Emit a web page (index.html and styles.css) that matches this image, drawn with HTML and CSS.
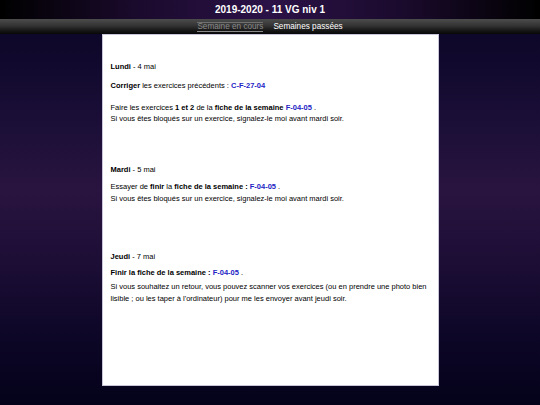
FILE: index.html
```
<!DOCTYPE html>
<html lang="fr">
<head>
<meta charset="utf-8">
<title>2019-2020 - 11 VG niv 1</title>
<link rel="stylesheet" href="styles.css">
</head>
<body>
<header class="titlebar">2019-2020 - 11 VG niv 1</header>
<nav class="navbar">
  <a class="tab tab-current">Semaine en cours</a>
  <a class="tab">Semaines passées</a>
</nav>
<main class="panel">
  <section class="day day-lundi">
    <p class="day-title"><b>Lundi</b> - 4 mai</p>
    <p class="task task-gap"><b>Corriger</b> les exercices précédents : <a class="ref">C-F-27-04</a></p>
    <p class="task">Faire les exercices <b>1 et 2</b> de la <b>fiche de la semaine</b> <a class="ref">F-04-05</a> .<br>Si vous êtes bloqués sur un exercice, signalez-le moi avant mardi soir.</p>
  </section>
  <section class="day day-mardi">
    <p class="day-title"><b>Mardi</b> - 5 mai</p>
    <p class="task">Essayer de <b>finir</b> la <b>fiche de la semaine : </b><a class="ref">F-04-05</a> .<br>Si vous êtes bloqués sur un exercice, signalez-le moi avant mardi soir.</p>
  </section>
  <section class="day day-jeudi">
    <p class="day-title"><b>Jeudi</b> - 7 mai</p>
    <p class="task task-small"><b>Finir la fiche de la semaine : </b><a class="ref">F-04-05</a> .</p>
    <p class="task">Si vous souhaitez un retour, vous pouvez scanner vos exercices (ou en prendre une photo bien lisible ; ou les taper à l'ordinateur) pour me les envoyer avant jeudi soir.</p>
  </section>
</main>
</body>
</html>
```
FILE: styles.css
```
* { box-sizing: border-box; }
html, body { margin: 0; padding: 0; }
body {
  width: 540px;
  height: 405px;
  overflow: hidden;
  font-family: "Liberation Sans", Arial, sans-serif;
  background: linear-gradient(to bottom, #0a0524 0px, #0d0729 34px, #1c0f38 130px, #29143f 190px, #1d0e36 260px, #0e0728 330px, #04021a 405px);
  display: flex;
  flex-direction: column;
}
.titlebar {
  height: 19px;
  flex: none;
  background: linear-gradient(to right, #000 0%, #1a0a2c 25%, #2b1247 50%, #1a0a2c 75%, #000 100%);
  color: #fff;
  font-weight: bold;
  font-size: 10px;
  line-height: 19px;
  text-align: center;
}
.navbar {
  height: 15px;
  flex: none;
  background: linear-gradient(to bottom, #4c4c4c 0%, #333 45%, #141414 80%, #080808 100%);
  display: flex;
  justify-content: center;
  align-items: center;
  gap: 10px;
  font-size: 8.2px;
}
.tab {
  color: #fff;
  line-height: 8px;
  text-decoration: none;
}
.tab-current {
  color: #8a8a8a;
  border-top: 1px solid #6f6f6f;
  border-bottom: 1px solid #8a8a8a;
}
.panel {
  width: 337px;
  height: 352px;
  margin: 0 auto;
  flex: none;
  background: #fff;
  border: 1px solid #c9c5d9;
  padding: 26px 7px 0 8px;
  font-size: 7.5px;
  line-height: 11.7px;
  color: #000;
}
.panel p { margin: 0; }
.day-title { margin-bottom: 7px !important; }
.task-gap { margin-bottom: 10.3px !important; }
.task-small { margin-bottom: 2.3px !important; }
.day-mardi { margin-top: 39.3px; }
.day-jeudi { margin-top: 46.3px; }
.day-mardi .day-title { margin-bottom: 5.3px !important; }
.day-jeudi .day-title { margin-bottom: 4.3px !important; }
.ref {
  color: #2323c4;
  font-weight: bold;
  text-decoration: none;
}
```
